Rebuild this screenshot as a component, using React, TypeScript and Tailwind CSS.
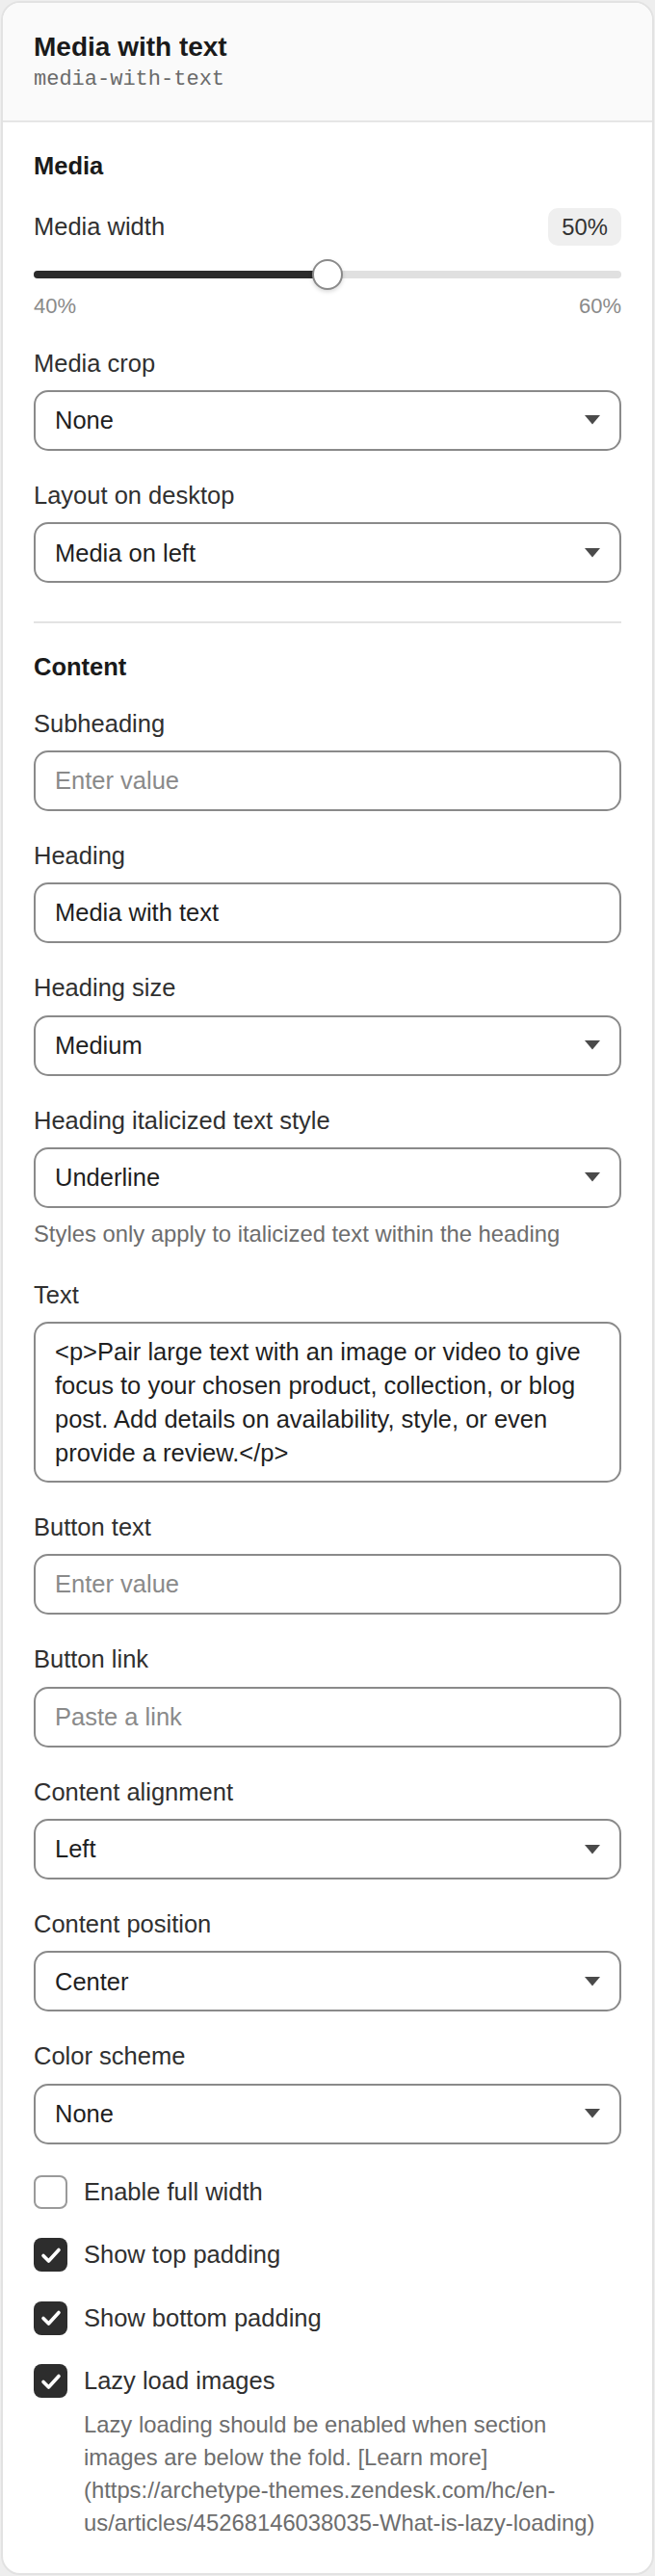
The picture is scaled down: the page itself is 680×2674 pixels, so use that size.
import type { ReactNode } from "react";

const sans = { fontFamily: '"Liberation Sans", Arial, sans-serif' };

function Caret() {
  return (
    <svg width="16" height="10" viewBox="0 0 16 10" className="shrink-0">
      <path d="M0 0 H16 L8 9.5 Z" fill="#4a4a4a" />
    </svg>
  );
}

function Field({ label, help, children }: { label: string; help?: string; children: ReactNode }) {
  return (
    <div className="flex flex-col">
      <label className="mb-[13px] text-[25.5px] leading-[1.15] text-[#303030]">{label}</label>
      {children}
      {help && <p className="mt-[10px] text-[23.8px] leading-[34px] text-[#6d6d6d]">{help}</p>}
    </div>
  );
}

function Select({ value }: { value: string }) {
  return (
    <div className="flex h-[63px] items-center justify-between rounded-[15px] border-2 border-[#8a8a8a] bg-white pl-[20px] pr-[20px] text-[25.5px] text-[#1f1f1f]">
      <span>{value}</span>
      <Caret />
    </div>
  );
}

function TextInput({ value, placeholder }: { value?: string; placeholder?: string }) {
  return (
    <input
      readOnly
      defaultValue={value}
      placeholder={placeholder}
      style={sans}
      className="h-[63px] w-full rounded-[15px] border-2 border-[#8a8a8a] bg-white px-[20px] text-[25.5px] text-[#1f1f1f] outline-none placeholder:text-[#8a8a8a]"
    />
  );
}

function Checkbox({ label, checked, help }: { label: string; checked?: boolean; help?: string }) {
  return (
    <div className="flex flex-col">
      <div className="flex items-center gap-[17px]">
        {checked ? (
          <span className="flex h-[35px] w-[35px] shrink-0 items-center justify-center rounded-[8px] bg-[#2d2d2d]">
            <svg width="22" height="18" viewBox="0 0 22 18">
              <path d="M3 9.5 L8.5 15 L19 3.5" fill="none" stroke="#fff" strokeWidth="3.6" strokeLinecap="round" strokeLinejoin="round" />
            </svg>
          </span>
        ) : (
          <span className="h-[35px] w-[35px] shrink-0 rounded-[8px] border-2 border-[#9a9a9a] bg-white" />
        )}
        <span className="text-[25.5px] leading-[1.15] text-[#303030]">{label}</span>
      </div>
      {help && <p className="mt-[11px] pl-[52px] text-[23.8px] leading-[34px] text-[#6d6d6d]">{help}</p>}
    </div>
  );
}

function RangeField({ label, value, min, max }: { label: string; value: number; min: number; max: number }) {
  const pct = ((value - min) / (max - min)) * 100;
  return (
    <div className="flex flex-col">
      <div className="flex items-center justify-between">
        <span className="text-[25.5px] leading-[1.15] text-[#303030]">{label}</span>
        <span className="flex h-[39px] items-center rounded-[10px] bg-[#efefef] px-[14px] text-[23.8px] text-[#333]">
          {value}%
        </span>
      </div>
      <div className="relative mt-[14px] flex h-[32px] items-center">
        <div className="h-[8px] w-full rounded-full bg-[#e0e0e0]">
          <div className="h-full rounded-full bg-[#2b2b2b]" style={{ width: `${pct}%` }} />
        </div>
        <span
          className="absolute top-0 h-[32px] w-[32px] -translate-x-1/2 rounded-full border-[2.5px] border-[#8a8a8a] bg-white shadow-[0_2px_4px_rgba(0,0,0,0.15)]"
          style={{ left: `${pct}%` }}
        />
      </div>
      <div className="mt-[4px] flex justify-between text-[22px] leading-[1.15] text-[#8a8a8a]">
        <span>{min}%</span>
        <span>{max}%</span>
      </div>
    </div>
  );
}

function SectionTitle({ children }: { children: ReactNode }) {
  return <h3 className="mb-[29px] text-[25.5px] font-bold leading-[1.15] text-[#1a1a1a]">{children}</h3>;
}

export default function App() {
  return (
    <div style={sans} className="min-h-screen bg-[#eeeeee] p-px">
      <div className="overflow-hidden rounded-[20px] border-2 border-[#e2e2e2] bg-white">
        <header className="border-b-2 border-[#e6e6e6] bg-[#fafafa] px-[32px] pb-[29px] pt-[30px]">
          <h2 className="text-[28px] font-bold leading-[1.15] text-[#1a1a1a]">Media with text</h2>
          <p
            className="mt-[6px] text-[22px] leading-[1.13] text-[#6a6a6a]"
            style={{ fontFamily: '"Liberation Mono", "Courier New", monospace' }}
          >
            media-with-text
          </p>
        </header>

        <div className="px-[32px] pb-[35px] pt-[31px]">
          <section className="flex flex-col">
            <SectionTitle>Media</SectionTitle>
            <div className="flex flex-col gap-[32px]">
              <RangeField label="Media width" value={50} min={40} max={60} />
              <Field label="Media crop">
                <Select value="None" />
              </Field>
              <Field label="Layout on desktop">
                <Select value="Media on left" />
              </Field>
            </div>
          </section>

          <hr className="mb-[31px] mt-[40px] border-t-2 border-[#e3e3e3]" />

          <section className="flex flex-col">
            <SectionTitle>Content</SectionTitle>
            <div className="flex flex-col gap-[32px]">
              <Field label="Subheading">
                <TextInput placeholder="Enter value" />
              </Field>
              <Field label="Heading">
                <TextInput value="Media with text" />
              </Field>
              <Field label="Heading size">
                <Select value="Medium" />
              </Field>
              <Field label="Heading italicized text style" help="Styles only apply to italicized text within the heading">
                <Select value="Underline" />
              </Field>
              <Field label="Text">
                <div className="rounded-[15px] border-2 border-[#8a8a8a] px-[20px] py-[11.5px] text-[25.5px] leading-[35px] text-[#1f1f1f]">
                  {"<p>Pair large text with an image or video to give focus to your chosen product, collection, or blog post. Add details on availability, style, or even provide a review.</p>"}
                </div>
              </Field>
              <Field label="Button text">
                <TextInput placeholder="Enter value" />
              </Field>
              <Field label="Button link">
                <TextInput placeholder="Paste a link" />
              </Field>
              <Field label="Content alignment">
                <Select value="Left" />
              </Field>
              <Field label="Content position">
                <Select value="Center" />
              </Field>
              <Field label="Color scheme">
                <Select value="None" />
              </Field>
              <div className="flex flex-col gap-[30.5px]">
                <Checkbox label="Enable full width" />
                <Checkbox label="Show top padding" checked />
                <Checkbox label="Show bottom padding" checked />
                <Checkbox
                  label="Lazy load images"
                  checked
                  help="Lazy loading should be enabled when section images are below the fold. [Learn more](https://archetype-themes.zendesk.com/hc/en-us/articles/45268146038035-What-is-lazy-loading)"
                />
              </div>
            </div>
          </section>
        </div>
      </div>
    </div>
  );
}
